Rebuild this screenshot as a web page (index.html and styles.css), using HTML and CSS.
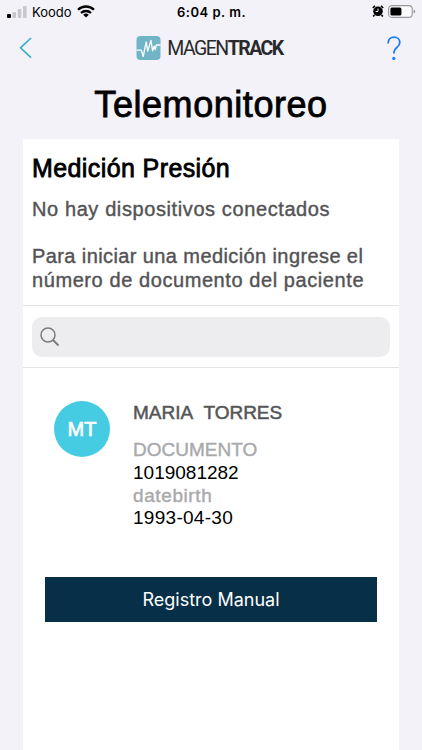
FILE: index.html
```html
<!DOCTYPE html>
<html lang="es">
<head>
  <meta charset="UTF-8" />
  <title>Telemonitoreo</title>
  <link rel="stylesheet" href="styles.css">
</head>
<body>
  <!-- Status bar -->
  <div class="status-bar">
    <div class="carrier">
      <svg class="signal" width="21" height="12" viewBox="0 0 21 12">
        <rect x="0" y="8" width="4" height="4" rx="1" fill="#000"/>
        <rect x="5.4" y="6" width="3.6" height="6" rx="1" fill="#c7c7cb"/>
        <rect x="10.7" y="3" width="3.6" height="9" rx="1" fill="#c7c7cb"/>
        <rect x="16" y="0" width="3.6" height="12" rx="1" fill="#c7c7cb"/>
      </svg>
      <span class="carrier-name">Koodo</span>
      <svg class="wifi" width="18" height="13" viewBox="0 0 18 13" fill="none" stroke="#000" stroke-width="2.3">
        <path d="M1 4.8a11.4 11.4 0 0 1 16 0"/>
        <path d="M4 8a7.2 7.2 0 0 1 10 0"/>
        <path d="M9 12.6 6.2 9.8a4 4 0 0 1 5.6 0z" fill="#000" stroke="none"/>
      </svg>
    </div>
    <span class="clock">6:04 p. m.</span>
    <div class="battery">
      <svg width="12" height="12" viewBox="0 0 12 12">
        <path d="M.8 3 3 .9M9 .9 11.2 3M2.4 10 1.2 11.5M9.6 10l1.2 1.5" stroke="#000" stroke-width="1.6"/>
        <circle cx="6" cy="6.3" r="4.8"/>
        <path d="M6 3.5v3H3.6" fill="none" stroke="#fff" stroke-width=".9"/>
      </svg>
      <svg width="28" height="13" viewBox="0 0 28 13">
        <rect x=".6" y=".6" width="23.6" height="11.8" rx="3.4" fill="#fbfbfd" stroke="#96969b" stroke-width="1.1"/>
        <rect x="2.4" y="2.4" width="11" height="8.2" rx="1.5"/>
        <path d="M25.6 4.4q1.6.6 1.6 2.1t-1.6 2.1z" fill="#96969b"/>
      </svg>
    </div>
  </div>

  <!-- Navigation -->
  <div class="nav-bar">
    <svg width="13" height="22" viewBox="0 0 13 22" fill="none" stroke="#35aec6" stroke-width="1.6">
      <path d="M12 1 1.5 10.8 12 20.6"/>
    </svg>
    <div class="logo">
      <svg width="25" height="24" viewBox="0 0 25 24">
        <rect x=".5" width="24" height="24" rx="4" fill="#70b5c7"/>
        <path d="M.5 14.2h4.8l1.9 6.3 3-14.6 1.5 9.3 3.2-10.8 1.7 10.4 1.5-4.6 1.2 3.4 1-4.6h4.2" fill="none" stroke="#fff" stroke-width="1.3" stroke-linejoin="round"/>
      </svg>
      <span class="logo-text">MAGEN<b>TRACK</b></span>
    </div>
    <svg width="14" height="25" viewBox="0 0 14 25" fill="none" stroke="#1c7cf8" stroke-width="1.8" stroke-linecap="round">
      <path d="M1.2 6.8C1.2 3.2 3.6 1.2 7 1.2s5.8 2.1 5.8 5.3c0 4.8-5.8 5.2-5.8 9.5v.8"/>
      <circle cx="6.8" cy="22.4" r="1.6" fill="#1c7cf8" stroke="none"/>
    </svg>
  </div>

  <h1>Telemonitoreo</h1>

  <div class="card">
    <div class="intro">
      <h2>Medición Presión</h2>
      <p class="devices">No hay dispositivos conectados</p>
      <p class="help">Para iniciar una medición ingrese el<br><span>número de documento del paciente</span></p>
    </div>
    <div class="search">
      <div class="search-box">
        <svg width="20" height="20" viewBox="0 0 20 20" fill="none" stroke="#7c7c7f">
          <circle cx="8" cy="8" r="7" stroke-width="1.5"/>
          <path d="m13 13 5.5 5.5" stroke-width="2"/>
        </svg>
      </div>
    </div>
    <div class="patient">
      <div class="avatar">MT</div>
      <div class="patient-data">
        <div class="name">MARIA&nbsp; TORRES</div>
        <div class="label">DOCUMENTO</div>
        <div class="value">1019081282</div>
        <div class="label label-date">datebirth</div>
        <div class="value value-date">1993-04-30</div>
      </div>
    </div>
    <button class="manual">Registro Manual</button>
  </div>
</body>
</html>
```

FILE: styles.css
```css
* {
  box-sizing: border-box;
}
body {
  margin: 0;
  height: 750px;
  display: flex;
  flex-direction: column;
  overflow: hidden;
  background: #f2f2f8;
  color: #000;
  font-family: "Liberation Sans", Arial, sans-serif;
}
svg {
  display: block;
  flex: none;
}
h1, h2, p {
  margin: 0;
  font-weight: normal;
}

/* status bar */
.status-bar {
  display: grid;
  grid-template-columns: 1fr auto 1fr;
  align-items: center;
  height: 24px;
  padding: 0 6px 0 7px;
}
.carrier {
  display: flex;
  align-items: center;
}
.carrier-name {
  margin: 0 5px 0 4px;
  font-family: Inter, sans-serif;
  font-size: 13px;
  letter-spacing: 0;
}
.signal, .wifi {
  margin-top: -1px;
}
.clock {
  font-family: Inter, sans-serif;
  font-size: 13px;
  font-weight: 600;
  letter-spacing: 0.5px;
}
.battery {
  display: flex;
  justify-content: flex-end;
  gap: 4px;
  margin-top: -1px;
}

/* navigation */
.nav-bar {
  display: flex;
  align-items: center;
  justify-content: space-between;
  height: 48px;
  padding: 0 21px 0 19px;
}
.logo {
  display: flex;
  align-items: center;
  gap: 6px;
}
.logo-text {
  margin-top: 1px;
  font-family: Roboto, sans-serif;
  font-size: 19.5px;
  letter-spacing: -1.55px;
  color: #29292b;
}

h1 {
  height: 67px;
  line-height: 66px;
  text-align: center;
  font-size: 36px;
  letter-spacing: 0.55px;
  -webkit-text-stroke: 0.8px;
}

/* content */
.card {
  flex: 1;
  margin: 0 23px;
  background: #fff;
}
.intro {
  height: 167px;
  padding: 14px 0 0 9px;
  border-bottom: 1px solid #e4e4e7;
  white-space: nowrap;
  color: #535355;
  font-size: 20px;
  line-height: 24px;
  -webkit-text-stroke: 0.4px;
}
.intro h2 {
  color: #000;
  font-size: 25px;
  line-height: 30px;
  letter-spacing: 0.4px;
  -webkit-text-stroke: 0.8px;
}
.devices {
  margin-top: 14px;
  letter-spacing: 0.6px;
}
.help {
  margin-top: 23px;
  letter-spacing: 0.4px;
}
.help span {
  letter-spacing: 0.58px;
}
.search {
  height: 62px;
  padding: 11px 9px;
  border-bottom: 1px solid #e4e4e7;
}
.search-box {
  display: flex;
  align-items: center;
  height: 40px;
  padding-left: 8px;
  border-radius: 10px;
  background: #ededef;
}

/* patient */
.patient {
  display: flex;
  gap: 23px;
  height: 209px;
  padding: 33px 0 0 31px;
}
.avatar {
  width: 56px;
  height: 56px;
  border-radius: 50%;
  background: #45cce2;
  color: #fff;
  font-size: 20px;
  line-height: 57px;
  text-align: center;
  -webkit-text-stroke: 0.7px;
}
.patient-data {
  font-size: 19px;
  line-height: 23px;
}
.name {
  margin-bottom: 14px;
  color: #555557;
  -webkit-text-stroke: 0.5px;
}
.label {
  color: #a9a9ab;
  -webkit-text-stroke: 0.4px;
}
.label-date {
  letter-spacing: 0.6px;
}
.value-date {
  margin-top: -1px;
  letter-spacing: 0.28px;
}
.manual {
  display: block;
  width: 332px;
  height: 45px;
  margin-left: 22px;
  padding: 0;
  border: 0;
  background: #072f48;
  color: #fff;
  font-family: Inter, sans-serif;
  font-size: 18px;
}
```
